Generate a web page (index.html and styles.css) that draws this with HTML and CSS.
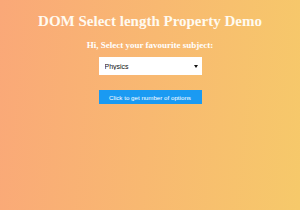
FILE: index.html
```html
<!DOCTYPE html>
<html lang="en">
<head>
    <meta charset="UTF-8">
    <meta name="viewport" content="width=device-width, initial-scale=1.0">
    <title>DOM Select length Property Demo</title>
    <link rel="stylesheet" href="styles.css">
</head>
<body>
    <div class="container">
        <h1>DOM Select length Property Demo</h1>
        <h3>Hi, Select your favourite subject:</h3>
        <div class="select-wrap">
            <select id="subjects">
                <option>Physics</option>
                <option>Chemistry</option>
                <option>Mathematics</option>
                <option>Biology</option>
            </select>
        </div>
        <button id="count">Click to get number of options</button>
        <p class="result"></p>
    </div>

    <script>
        const select = document.getElementById('subjects');
        const result = document.querySelector('.result');

        document.getElementById('count').addEventListener('click', () => {
            result.textContent = 'Number of options: ' + select.length;
        });
    </script>
</body>
</html>
```

FILE: styles.css
```css
* {
    margin: 0;
    padding: 0;
    box-sizing: border-box;
}

body {
    min-height: 100vh;
    background: linear-gradient(95deg, #faa878, #f6c96a);
    font-family: "Liberation Serif", serif;
    color: #fff;
}

.container {
    display: flex;
    flex-direction: column;
    align-items: center;
    padding-top: 12px;
}

h1 {
    font-size: 15px;
    line-height: 18px;
    color: #fffaf0;
}

h3 {
    font-size: 9px;
    line-height: 10px;
    margin-top: 10px;
}

.select-wrap {
    position: relative;
    margin-top: 7px;
}

.select-wrap::after {
    content: "";
    position: absolute;
    right: 4px;
    top: 8px;
    border-left: 2px solid transparent;
    border-right: 2px solid transparent;
    border-top: 3px solid #111;
    pointer-events: none;
}

select {
    display: block;
    width: 103px;
    height: 18px;
    padding: 0 6px;
    border: none;
    border-radius: 0;
    appearance: none;
    background: #fff;
    font-family: "Liberation Sans", Arial, sans-serif;
    font-size: 7px;
    color: #111;
}

button {
    width: 103px;
    height: 14px;
    margin-top: 15px;
    border: none;
    background: #1a9af2;
    color: #fff;
    font-family: "Liberation Sans", Arial, sans-serif;
    font-size: 6.2px;
    cursor: pointer;
}

.result {
    margin-top: 8px;
    font-size: 9px;
}
```
